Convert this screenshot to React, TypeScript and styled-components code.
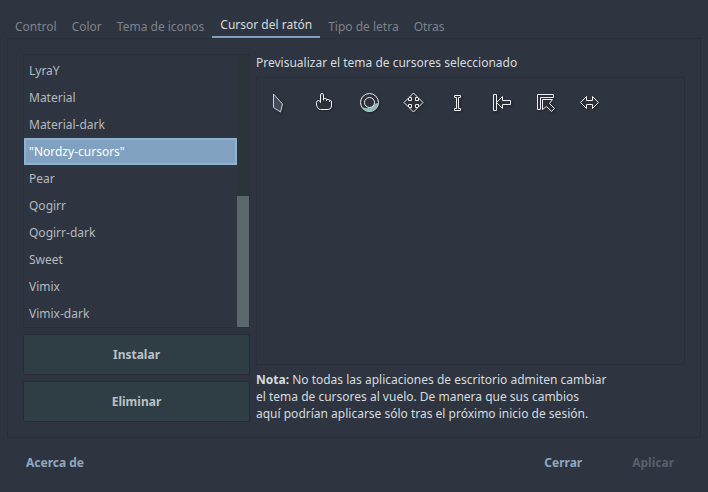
import React, { useState } from "react";
import styled, { createGlobalStyle } from "styled-components";

const GlobalStyle = createGlobalStyle`
  * { box-sizing: border-box; }
  body {
    margin: 0;
    background: #2e3440;
    color: #d5dcdf;
    font-family: "Noto Sans", sans-serif;
    font-size: 12px;
    line-height: 17px;
  }
  button { font: inherit; }
`;

const Window = styled.div`
  display: flex;
  flex-direction: column;
  min-height: 100vh;
  padding: 10px 7px 0;
`;

const TabBar = styled.div`
  display: flex;
  align-items: stretch;
  gap: 1px;
  height: 28px;
  padding-left: 1px;
`;

const Tab = styled.button<{ $active: boolean }>`
  border: 0;
  border-bottom: 2px solid ${(p) => (p.$active ? "#81a1c1" : "transparent")};
  background: none;
  padding: ${(p) => (p.$active ? "2px 8px 0" : "6px 7px 0")};
  color: ${(p) => (p.$active ? "#d5dcdf" : "#7d8389")};
  white-space: nowrap;
`;

const Panel = styled.main`
  flex: 1;
  display: flex;
  gap: 6px;
  padding: 15px;
  border: 1px solid #292e38;
`;

const Sidebar = styled.section`
  display: flex;
  flex-direction: column;
  flex: 0 0 227px;
  gap: 6px;
`;

const ListFrame = styled.div`
  flex: 1;
  display: flex;
  border: 1px solid #292e38;
`;

const ThemeList = styled.ul`
  flex: 1;
  list-style: none;
  margin: 0;
  padding: 2px 0 0;
`;

const ThemeItem = styled.li<{ $selected: boolean }>`
  height: 27px;
  padding: 3px;
  border: 2px solid ${(p) => (p.$selected ? "#8fb2d0" : "transparent")};
  background: ${(p) => (p.$selected ? "#81a1c1" : "transparent")};
  background-clip: padding-box;
  color: ${(p) => (p.$selected ? "#ffffff" : "#b4babe")};
  cursor: default;
`;

const ScrollTrack = styled.div`
  display: flex;
  flex-direction: column;
  justify-content: flex-end;
  width: 12px;
  background: #2b3539;
`;

const ScrollThumb = styled.div`
  height: 48%;
  background: #5b676b;
`;

const ActionButton = styled.button`
  height: 41px;
  border: 1px solid #262d34;
  border-radius: 2px;
  background: #2f3d44;
  color: #b9c1c5;
  font-weight: 700;
`;

const Content = styled.section`
  flex: 1;
  min-width: 0;
  display: flex;
  flex-direction: column;
  gap: 6px;
`;

const Heading = styled.h1`
  margin: 0;
  font-size: 12px;
  font-weight: 400;
`;

const Preview = styled.div`
  flex: 1;
  display: flex;
  flex-wrap: wrap;
  align-content: flex-start;
  gap: 20px;
  padding: 12px;
  border: 1px solid #292e38;
`;

const CursorIcon = styled.svg`
  width: 24px;
  height: 24px;
  fill: #2c303b;
  stroke: #eceff4;
  stroke-width: 1;
  stroke-linejoin: round;
  filter: drop-shadow(1px 1px 1px #20242c);
`;

const Note = styled.p`
  margin: 0;
`;

const Footer = styled.footer`
  display: flex;
  align-items: center;
  justify-content: space-between;
  height: 54px;
  padding: 0 16px 6px 8px;
`;

const FooterButton = styled.button`
  border: 0;
  background: none;
  padding: 8px 11px;
  color: #8fa8c0;
  font-weight: 700;
  &:disabled { color: #59606b; }
`;

const FooterEnd = styled.div`
  display: flex;
  gap: 28px;
`;

const tabs = ["Control", "Color", "Tema de iconos", "Cursor del ratón", "Tipo de letra", "Otras"];

const themes = [
  "LyraY", "Material", "Material-dark", '"Nordzy-cursors"', "Pear",
  "Qogirr", "Qogirr-dark", "Sweet", "Vimix", "Vimix-dark",
];

const cursors: { name: string; drawing: React.ReactNode }[] = [
  {
    name: "Flecha",
    drawing: <path fill="#434b5a" stroke="#cdd2d8" d="M4.5 4 L13.5 14 L11.5 22 L4.5 17.5 Z" />,
  },
  {
    name: "Mano",
    drawing: (
      <path d="M7.5 12.5 V5 Q7.5 3.5 9 3.5 Q10.5 3.5 10.5 5 V9 M10.5 10.5 V8.5 H12.5 Q13.5 8.5 13.5 9.5 V11 M13.5 9.5 H15.5 Q16.5 9.5 16.5 10.5 V12 M16.5 10.5 H17.5 Q18.5 10.5 18.5 12 V16 Q18.5 19.5 15 19.5 H7.5 Q5.5 19.5 4.5 17.5 L3.5 15 V12.5 Q3.5 10.5 5.5 10.5 Q7 10.5 7.5 12.5" />
    ),
  },
  {
    name: "Espera",
    drawing: (
      <>
        <circle cx="12.5" cy="12.5" r="9" />
        <path stroke="none" fill="#8fbcbb" d="M4.5 16.5 C8 18.5 10 18.5 13 17.5 C16 16.5 17 13 21.5 13 A9 9 0 0 1 4.5 16.5 Z" />
        <circle cx="12.5" cy="12.5" r="5" />
      </>
    ),
  },
  {
    name: "Mover",
    drawing: (
      <path d="M12.5 3 L17 7.5 H14.5 V10.5 H17.5 V8 L22 12.5 L17.5 17 V14.5 H14.5 V17.5 H17 L12.5 22 L8 17.5 H10.5 V14.5 H7.5 V17 L3 12.5 L7.5 8 V10.5 H10.5 V7.5 H8 Z" />
    ),
  },
  {
    name: "Texto",
    drawing: <path d="M9.5 5.5 H15.5 V7.5 H13.5 V18.5 H15.5 V20.5 H9.5 V18.5 H11.5 V7.5 H9.5 Z" />,
  },
  {
    name: "Borde izquierdo",
    drawing: (
      <>
        <path d="M4.5 4.5 H7.5 V20.5 H4.5 Z" />
        <path d="M7.5 12.5 L13.5 6.5 V10.5 H21.5 V14.5 H13.5 V18.5 Z" />
      </>
    ),
  },
  {
    name: "Esquina superior izquierda",
    drawing: (
      <>
        <path d="M4.5 4.5 H20.5 V7.5 H7.5 V19.5 H4.5 Z" />
        <path d="M9.5 9.5 H19.5 L16.5 13.5 L21.5 18.5 L18.5 21.5 L13.5 16.5 L9.5 19.5 Z" />
      </>
    ),
  },
  {
    name: "Redimensionar en horizontal",
    drawing: <path d="M3.5 12.5 L9.5 6.5 V10.5 H15.5 V6.5 L21.5 12.5 L15.5 18.5 V14.5 H9.5 V18.5 Z" />,
  },
];

export default function App() {
  const [tab, setTab] = useState(3);
  const [selected, setSelected] = useState(3);

  return (
    <>
      <GlobalStyle />
      <Window>
        <TabBar role="tablist">
          {tabs.map((label, i) => (
            <Tab key={label} role="tab" aria-selected={i === tab} $active={i === tab} onClick={() => setTab(i)}>
              {label}
            </Tab>
          ))}
        </TabBar>
        <Panel role="tabpanel">
          <Sidebar>
            <ListFrame>
              <ThemeList role="listbox" aria-label="Cursor del ratón">
                {themes.map((name, i) => (
                  <ThemeItem
                    key={name}
                    role="option"
                    aria-selected={i === selected}
                    $selected={i === selected}
                    onClick={() => setSelected(i)}
                  >
                    {name}
                  </ThemeItem>
                ))}
              </ThemeList>
              <ScrollTrack>
                <ScrollThumb />
              </ScrollTrack>
            </ListFrame>
            <ActionButton>Instalar</ActionButton>
            <ActionButton>Eliminar</ActionButton>
          </Sidebar>
          <Content>
            <Heading>Previsualizar el tema de cursores seleccionado</Heading>
            <Preview>
              {cursors.map((c) => (
                <CursorIcon key={c.name} viewBox="0 0 24 24" role="img" aria-label={c.name}>
                  {c.drawing}
                </CursorIcon>
              ))}
            </Preview>
            <Note>
              <b>Nota:</b> No todas las aplicaciones de escritorio admiten cambiar
              <br />
              el tema de cursores al vuelo. De manera que sus cambios
              <br />
              aquí podrían aplicarse sólo tras el próximo inicio de sesión.
            </Note>
          </Content>
        </Panel>
        <Footer>
          <FooterButton>Acerca de</FooterButton>
          <FooterEnd>
            <FooterButton>Cerrar</FooterButton>
            <FooterButton disabled>Aplicar</FooterButton>
          </FooterEnd>
        </Footer>
      </Window>
    </>
  );
}
